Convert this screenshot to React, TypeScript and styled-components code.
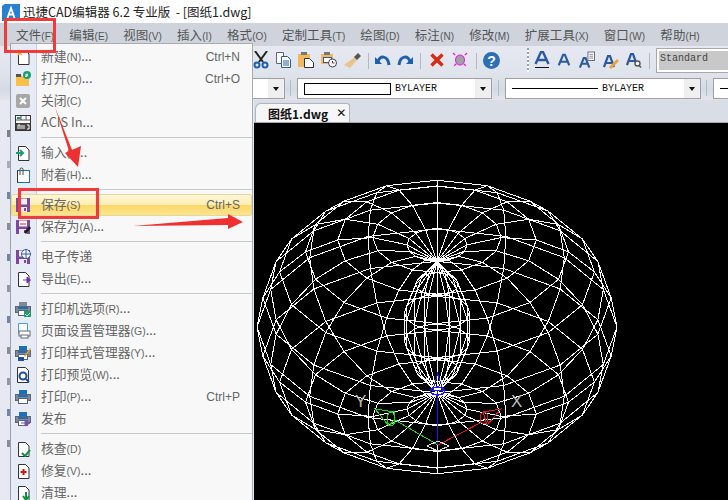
import React from "react";
import styled, { createGlobalStyle } from "styled-components";

const Global = createGlobalStyle`
  html, body { margin: 0; padding: 0; background: #fff; }
  body { font-family: "Noto Sans CJK SC", "Liberation Sans", sans-serif; }
`;
const Page = styled.div`
  position: relative; width: 728px; height: 500px; overflow: hidden;
  display: flex; flex-direction: column; background: #fff;
`;
const TitleBar = styled.div`
  height: 23px; display: flex; align-items: center; padding-left: 2px; gap: 3px;
  font-size: 12.5px; color: #222; white-space: pre; background: #fff;
`;
const MenuBar = styled.div`
  height: 23px; background: #ced3dc; display: flex; align-items: center; gap: 15px; padding: 0 0 1px 16px; box-sizing: border-box;
`;
const MenuLabel = styled.span`
  font-size: 12.5px; color: #555; white-space: nowrap; letter-spacing: .1px;
  small { font-size: 10px; font-family: "Liberation Sans", sans-serif; }
`;
const ToolRow = styled.div`
  height: 28px; background: linear-gradient(#e6e9f1, #dfe3ec); display: flex; align-items: center; padding-left: 253px; flex: none;
`;
const ComboRow = styled.div`
  height: 26px; background: linear-gradient(#dfe3ec, #d6dae4 60%, #e2e5ee); display: flex; align-items: flex-start; padding: 4px 0 0 253px; flex: none; box-sizing: border-box;
`;
const Tool = styled.span<{ $w: number; $ml?: number }>`
  width: ${p => p.$w}px; height: 18px; margin-left: ${p => p.$ml ?? 0}px; flex: none; display: flex; align-items: center; justify-content: center;
  svg { display: block; }
`;
const Sep = styled.i<{ $ml: number }>`
  width: 1px; height: 16px; background: #b4b8c1; margin: 2px 0 0 ${p => p.$ml}px; flex: none;
`;
const Grip = styled.i<{ $ml: number }>`
  width: 2px; height: 24px; margin-left: ${p => p.$ml}px; flex: none;
  background: repeating-linear-gradient(#9aa0aa 0 2px, #fff 2px 4px);
`;
const StyleBox = styled.div`
  margin-left: 6px; flex: 1; height: 19px; background: #fff; border: 1px solid #a8a8a8; border-right: none;
  padding: 2px 0 2px 2px; display: flex;
`;
const StyleValue = styled.div`
  flex: 1; background: #c8c8c8; color: #444; font: 10px/15px "Liberation Mono", monospace; padding-left: 1px;
`;
const Combo = styled.div<{ $w: number; $ml: number; $open?: boolean }>`
  width: ${p => p.$w}px; height: 19px; margin-left: ${p => p.$ml}px; flex: none; box-sizing: content-box;
  border: 1px solid #a0a0a0; background: #fff; display: flex; align-items: center; position: relative;
  border-right: ${p => (p.$open ? "none" : "1px solid #a0a0a0")};
  font: 10px "Liberation Mono", monospace; color: #111;
`;
const ComboFirst = styled(Combo)`
  border-left: none;
`;
const ComboArrow = styled.span`
  width: 16px; align-self: stretch; background: #efefef; display: flex; align-items: center; justify-content: center; margin-left: auto;
  &::after { content: ""; border: 3px solid transparent; border-top: 4px solid #111; border-bottom: none; }
`;
const Swatch = styled.span`
  width: 85px; height: 10px; border: 1px solid #000; margin: 0 4px 0 6px; flex: none;
`;
const LineSample = styled.span<{ $w: number }>`
  width: ${p => p.$w}px; height: 1px; background: #000; margin: 0 4px 0 6px; flex: none;
`;
const Workspace = styled.div`
  flex: 1; display: flex; min-height: 0;
`;
const Side = styled.div`
  width: 254px; flex: none; background: #e6e9f1; padding-top: 30px; display: flex; flex-direction: column; gap: 24px; align-items: flex-start;
`;
const SideDot = styled.i<{ $c: string }>`
  width: 3px; height: 7px; background: ${p => p.$c}; margin-left: 7px; flex: none; opacity: .7;
`;
const Main = styled.div`
  flex: 1; display: flex; flex-direction: column; min-width: 0;
`;
const TabStrip = styled.div`
  height: 23px; flex: none; background: #d9dde6; border-bottom: 1px solid #a8a8a8; display: flex; align-items: flex-end; padding-left: 1px; box-sizing: border-box;
`;
const Tab = styled.div`
  width: 95px; height: 19px; background: #f6f6f8; border: 1px solid #b0b4bc; border-bottom: none; border-radius: 6px 3px 0 0; box-sizing: border-box;
  font-size: 12px; font-weight: 700; color: #111; display: flex; align-items: center; padding-left: 12px; white-space: nowrap;
`;
const TabClose = styled.span`
  margin-left: 8px; font-size: 12px; font-family: "DejaVu Sans", sans-serif;
`;
const Canvas = styled.div`
  flex: 1; background: #000; min-height: 0; overflow: hidden;
  svg { display: block; }
`;
const Menu = styled.div`
  position: absolute; left: 10px; top: 43px; width: 243px; height: 457px; box-sizing: border-box; overflow: hidden;
  background: linear-gradient(90deg, #e7ebf5 0 25px, #c9cdd6 25px 26px, #f8f8f8 26px);
  border-left: 1px solid #9aa0ac; border-right: 1px solid #a8acb4; border-top: 1px solid #a8acb4; padding-top: 2px;
`;
const Row = styled.div<{ $active?: boolean }>`
  height: 22px; display: flex; align-items: center; padding-left: 4px; padding-right: 12px; box-sizing: border-box; position: relative;
  font-size: 12.8px; color: #666; white-space: nowrap;
  small { font-size: 10.5px; font-family: "Liberation Sans", sans-serif; }
  ${p => p.$active && `
    background: linear-gradient(#fdf6d8, #fdeeb4 48%, #fbd768 52%, #fce48f);
    border: 1px solid #e4d79c; border-radius: 2px;
    padding-left: 3px; padding-right: 11px;
  `}
`;
const RowLabel = styled.span`
  margin-bottom: 3px;
`;
const RowIcon = styled.span`
  width: 16px; height: 16px; flex: none; margin-right: 10px; svg { display: block; }
`;
const Shortcut = styled.span`
  margin-left: auto; font: 12px "Liberation Sans", sans-serif; color: #666;
`;
const Divider = styled.div`
  height: 8px; margin-left: 30px; margin-right: 0; position: relative;
  &::after { content: ""; position: absolute; left: 0; right: 0; top: 3px; height: 1px; background: #c9c9c9; }
`;
const Annotation = styled.svg`
  position: absolute; left: 0; top: 0; pointer-events: none;
`;

const S: React.FC<{ w?: number; h?: number; children: React.ReactNode }> = ({ w = 16, h = 16, children }) => (
  <svg width={w} height={h} viewBox={`0 0 ${w} ${h}`}>{children}</svg>
);

const Doc = ({ stroke = "#333" }: { stroke?: string }) => (
  <path d="M3.5 1.5h7l3.5 3.5v10.5H3.5z" fill="#fff" stroke={stroke} />
);
const Printer = ({ top = "#1f6fb8" }: { top?: string }) => (
  <>
    <rect x="4" y="1" width="8" height="5" fill={top} />
    <rect x="0.5" y="5.5" width="15" height="6" fill="#7f8a96" stroke="#5d6670" />
    <rect x="3.5" y="9.5" width="9" height="5" fill="#fff" stroke="#5d6670" />
    <rect x="3" y="6" width="10" height="2" fill="#1f6fb8" />
  </>
);
const Floppy = () => (
  <>
    <path d="M1 1h14v14H1z" fill="#7a4b9c" />
    <rect x="4" y="1.5" width="8" height="6" fill="#f3f1f6" />
    <rect x="4" y="10" width="8" height="5" fill="#e8e8ee" />
    <rect x="9" y="11" width="2" height="3" fill="#7a4b9c" />
  </>
);

const icons: Record<string, React.ReactNode> = {
  new: <S><Doc /><path d="M4 0l1 2.5L8 2 6 4l1.5 2.5L5 5.5 2.5 7 3 4 1 2.5 3.5 2z" fill="#f5a623" /></S>,
  open: <S><path d="M1 4h5l1 1h7v10H1z" fill="#f6c04a" /><path d="M1 3h5v3H1z" fill="#555" /><circle cx="12" cy="4" r="4" fill="#1aa06d" /><path d="M10 4h3M12 2.5v3h-2" stroke="#fff" fill="none" /></S>,
  close: <S><rect x="1" y="1" width="14" height="14" rx="2" fill="#a7a7a7" /><path d="M5 5l6 6M11 5l-6 6" stroke="#fff" strokeWidth="2" /></S>,
  acis: <S><rect x="0.5" y="0.5" width="15" height="15" fill="#fff" stroke="#333" /><path d="M1 5h14M6 1v4M11 1v4" stroke="#555" /><rect x="1" y="8" width="14" height="7" fill="#444" /><path d="M2 3h4" stroke="#1aa06d" strokeWidth="2" /><path d="M3 14v-4h2v4M7 14v-4M9 14v-4M12 14h2v-4h-2" stroke="#fff" fill="none" /></S>,
  input: <S><Doc /><path d="M1 8h6M5 5l3 3-3 3" stroke="#1aa06d" strokeWidth="2" fill="none" /></S>,
  attach: <S><rect x="2.5" y="3.5" width="12" height="12" fill="#fff" stroke="#1f6fb8" /><path d="M2.5 15.5v-12" stroke="#333" /><path d="M5 8V2.5a1.5 1.5 0 0 1 3 0V8" stroke="#444" fill="none" /></S>,
  save: <S><Floppy /></S>,
  saveas: <S><Floppy /><path d="M9 13l5-6 2 2-5 6z" fill="#222" /><path d="M5 5h6" stroke="#d33" /></S>,
  send: <S><Floppy /><circle cx="11" cy="5" r="4.5" fill="#fff" stroke="#2b5cab" /><path d="M6.5 5h9M11 .5v9" stroke="#2b5cab" /></S>,
  export: <S><Doc /><path d="M8 9h5M12 6l3.5 3-3.5 3z" fill="#7b2fa8" stroke="#7b2fa8" /></S>,
  plotter: <S><Printer top="#7f8a96" /><rect x="9" y="10" width="7" height="6" fill="#1aa06d" /><path d="M10 13l2 2 3-3" stroke="#fff" fill="none" /></S>,
  page: <S><path d="M3.5.5h9v10h-9z" fill="#fff" stroke="#4aa3d8" /><rect x="4" y="8" width="11" height="5" fill="#fff" stroke="#667" /><rect x="6" y="12" width="7" height="3" fill="#fff" stroke="#667" /></S>,
  pstyle: <S><Printer /><path d="M9 11l6-8 1 1-6 8z" fill="#e8a33a" /><path d="M3 12h6v4H3z" fill="#1f4f9c" /></S>,
  preview: <S><path d="M2.5.5h8l3 3v12h-11z" fill="#fff" stroke="#333" /><circle cx="8" cy="9" r="3.5" fill="none" stroke="#1f4f9c" strokeWidth="2" /><path d="M11 12l3 3" stroke="#1f4f9c" strokeWidth="2" /></S>,
  print: <S><Printer /></S>,
  publish: <S><Printer /><path d="M6 12h6M10 9l5 3-5 3z" fill="#7b4fb0" stroke="#7b4fb0" /></S>,
  audit: <S><Doc /><path d="M7 12l3 3 5-6" stroke="#0f8f3f" strokeWidth="2" fill="none" /></S>,
  repair: <S><Doc /><path d="M8.5 6v6M5.5 9h6" stroke="#e01010" strokeWidth="2" /></S>,
  purge: <S><Doc /><path d="M11 7v7M8 11l3 4 3-4" stroke="#0f8f3f" strokeWidth="2" fill="none" /></S>,
};

type Item = { k?: string; zh?: string; key?: string; tail?: string; sc?: string; active?: boolean; sep?: boolean };
const items: Item[] = [
  { k: "new", zh: "新建", key: "(N)", tail: "...", sc: "Ctrl+N" },
  { k: "open", zh: "打开", key: "(O)", tail: "...", sc: "Ctrl+O" },
  { k: "close", zh: "关闭", key: "(C)" },
  { k: "acis", zh: "ACIS In", tail: "..." },
  { sep: true },
  { k: "input", zh: "输入", key: "(I)", tail: "..." },
  { k: "attach", zh: "附着", key: "(H)", tail: "..." },
  { sep: true },
  { k: "save", zh: "保存", key: "(S)", sc: "Ctrl+S", active: true },
  { k: "saveas", zh: "保存为", key: "(A)", tail: "..." },
  { sep: true },
  { k: "send", zh: "电子传递" },
  { k: "export", zh: "导出", key: "(E)", tail: "..." },
  { sep: true },
  { k: "plotter", zh: "打印机选项", key: "(R)", tail: "..." },
  { k: "page", zh: "页面设置管理器", key: "(G)", tail: "..." },
  { k: "pstyle", zh: "打印样式管理器", key: "(Y)", tail: "..." },
  { k: "preview", zh: "打印预览", key: "(W)", tail: "..." },
  { k: "print", zh: "打印", key: "(P)", tail: "...", sc: "Ctrl+P" },
  { k: "publish", zh: "发布" },
  { sep: true },
  { k: "audit", zh: "核查", key: "(D)" },
  { k: "repair", zh: "修复", key: "(V)", tail: "..." },
  { k: "purge", zh: "清理", tail: "..." },
];
const menus: [string, string][] = [
  ["文件", "(F)"], ["编辑", "(E)"], ["视图", "(V)"], ["插入", "(I)"], ["格式", "(O)"], ["定制工具", "(T)"],
  ["绘图", "(D)"], ["标注", "(N)"], ["修改", "(M)"], ["扩展工具", "(X)"], ["窗口", "(W)"], ["帮助", "(H)"],
];

const BlueA = ({ under = false }: { under?: boolean }) => (
  <svg width="16" height="18" viewBox="0 0 16 18">
    <path d={under ? "M1.5 13L7 1h2l5.5 12M4 9h8" : "M2 15L7 3h2l5 12M4.5 11h7"} stroke="#2b5a9e" strokeWidth="2.4" fill="none" />
    {under && <path d="M1 16.5h14" stroke="#111" />}
  </svg>
);

/* Wire-frame: a spindle torus projected orthographically, the way the CAD view shows it. */
const CX = 437 - 254, CY = 327 - 123;
const R = 73, r = 107, TILT = (33 * Math.PI) / 180, NU = 16, NV = 19;
const pt = (u: number, v: number): string => {
  const rho = R + r * Math.cos(v);
  const h = r * Math.sin(v);
  const x = rho * Math.cos(u);
  const z = rho * Math.sin(u);
  return `${(CX + x).toFixed(1)},${(CY - (h * Math.cos(TILT) + z * Math.sin(TILT))).toFixed(1)}`;
};
const wires: string[] = [];
for (let i = 0; i < NU; i++) {
  const u = (i / NU) * Math.PI * 2;
  const a: string[] = [];
  for (let j = 0; j <= NV; j++) a.push(pt(u, (j / NV) * Math.PI * 2));
  wires.push(a.join(" "));
}
for (let j = 0; j < NV; j++) {
  const v = (j / NV) * Math.PI * 2;
  const a: string[] = [];
  for (let i = 0; i <= NU; i++) a.push(pt((i / NU) * Math.PI * 2, v));
  wires.push(a.join(" "));
}
const ox = -254, oy = -123;

const Wire = () => (
  <svg width="474" height="377" viewBox="0 0 474 377">
    <g fill="none" stroke="#fff" strokeWidth="1" strokeLinejoin="bevel" shapeRendering="crispEdges">
      {wires.map((d, i) => <polyline key={i} points={d} />)}
    </g>
    <g transform={`translate(${ox} ${oy})`} fill="none" shapeRendering="crispEdges">
      <text x="355" y="407" fill="#bbb" fontFamily="Liberation Sans, sans-serif" fontSize="17">Y</text>
      <text x="511" y="407" fill="#bbb" fontFamily="Liberation Sans, sans-serif" fontSize="17">X</text>
      <path d="M438 445L395 420M375 409L395 412 394 420 389 426z" stroke="#18d818" />
      <ellipse cx="391" cy="419" rx="4" ry="7" stroke="#18d818" />
      <path d="M438 445L482 422M501 409L483 412 487 425z" stroke="#e81818" />
      <ellipse cx="484" cy="418" rx="4" ry="6" stroke="#e81818" />
      <path d="M437.5 445V390M437.5 374L433 390h10z" stroke="#1a1aff" />
      <ellipse cx="437.5" cy="391" rx="7" ry="4" stroke="#1a1aff" strokeWidth="1.4" />
      <path d="M427 446l11-5 11 5-11 5z" stroke="#ddd" />
    </g>
  </svg>
);

export default function App() {
  return (
    <Page>
      <Global />
      <TitleBar>
        <svg width="18" height="18" viewBox="0 0 18 18">
          <rect x="0" y="1" width="18" height="17" fill="#2a7fd0" />
          <path d="M4 0L0 3V0zM8 1l3-1 3 1z" fill="#fff" />
          <path d="M5.5 15L9 5l3.5 10M7 11.5h4" stroke="#fff" strokeWidth="1.8" fill="none" />
        </svg>
        <span>迅捷CAD编辑器 6.2 专业版  - [图纸1.dwg]</span>
      </TitleBar>
      <MenuBar>
        {menus.map(([a, b]) => <MenuLabel key={a}>{a}<small>{b}</small></MenuLabel>)}
      </MenuBar>
      <ToolRow>
        <Tool $w={16}><svg width="16" height="18" viewBox="0 0 16 18"><path d="M2 0l8 11M14 0L6 11" stroke="#222" strokeWidth="2" /><circle cx="4" cy="14" r="2.5" fill="none" stroke="#1f5fb0" strokeWidth="2" /><circle cx="12" cy="14" r="2.5" fill="none" stroke="#1f5fb0" strokeWidth="2" /></svg></Tool>
        <Tool $w={16} $ml={6}><svg width="16" height="16" viewBox="0 0 16 16"><path d="M1.5.5h7v11h-7z" fill="#fff" stroke="#667" /><path d="M6.5 4.5h6l3 3v8h-9z" fill="#fff" stroke="#2b5a9e" /><path d="M8 9h6M8 11h6M8 13h6" stroke="#2b5a9e" /></svg></Tool>
        <Tool $w={16} $ml={7}><svg width="16" height="16" viewBox="0 0 16 16"><path d="M0 2h12v13H0z" fill="#f4b85c" /><rect x="3" y="0" width="6" height="3" fill="#777" /><path d="M6.5 6.5h5l4 4v5h-9z" fill="#fff" stroke="#333" /></svg></Tool>
        <Tool $w={17} $ml={7}><svg width="17" height="16" viewBox="0 0 17 16"><path d="M0 2h12v10H0z" fill="#f4b85c" /><rect x="3" y="0" width="6" height="3" fill="#777" /><rect x="2.5" y="5.5" width="8" height="5" fill="#fff" stroke="#2b5a9e" /><circle cx="11.5" cy="11" r="4" fill="#fff" stroke="#445" /><path d="M11.5 9v2h2" stroke="#445" fill="none" /></svg></Tool>
        <Tool $w={18} $ml={6}><svg width="18" height="16" viewBox="0 0 18 16"><path d="M11 5L0 13l6 3 7-8z" fill="#e8c48a" /><path d="M10 5l4-4 3 3-4 4z" fill="#555" /></svg></Tool>
        <Sep $ml={6} />
        <Tool $w={16} $ml={6}><svg width="16" height="14" viewBox="0 0 16 14"><path d="M3 9c1-7 10-7 11 3" fill="none" stroke="#1f5fb0" strokeWidth="3" /><path d="M0 4v7h7z" fill="#1f5fb0" /></svg></Tool>
        <Tool $w={16} $ml={6}><svg width="16" height="14" viewBox="0 0 16 14"><path d="M13 9C12 2 3 2 2 12" fill="none" stroke="#1f5fb0" strokeWidth="3" /><path d="M16 4v7H9z" fill="#1f5fb0" /></svg></Tool>
        <Sep $ml={7} />
        <Tool $w={14} $ml={9}><svg width="14" height="14" viewBox="0 0 14 14"><path d="M1.5 1.5l11 11M12.5 1.5l-11 11" stroke="#d92b12" strokeWidth="3.4" /></svg></Tool>
        <Tool $w={16} $ml={8}><svg width="16" height="16" viewBox="0 0 16 16"><path d="M1 1l14 14M15 1L1 15" stroke="#f010e0" strokeWidth="1.3" strokeDasharray="3 2" /><ellipse cx="8" cy="8" rx="4.5" ry="5" fill="#a0a0a8" stroke="#f010e0" /></svg></Tool>
        <Sep $ml={8} />
        <Tool $w={17} $ml={6}><svg width="17" height="17" viewBox="0 0 17 17"><circle cx="8.5" cy="8.5" r="8.5" fill="#2c6fb5" /><text x="8.5" y="13.5" textAnchor="middle" fontFamily="Liberation Sans, sans-serif" fontWeight="700" fontSize="14" fill="#fff">?</text></svg></Tool>
        <Grip $ml={27} />
        <Tool $w={16} $ml={5}><BlueA under /></Tool>
        <Tool $w={14} $ml={7}><BlueA /></Tool>
        <Tool $w={16} $ml={8}><svg width="17" height="18" viewBox="0 0 17 18"><path d="M1 17L5 7h2l4 10M3 13h6" stroke="#2b5a9e" strokeWidth="2.2" fill="none" /><rect x="9.5" y=".5" width="7" height="9" fill="#fff" stroke="#667" /><path d="M11 3h4M11 5h4M11 7h4" stroke="#889" /></svg></Tool>
        <Tool $w={16} $ml={8}><svg width="16" height="18" viewBox="0 0 16 18"><path d="M1 16L5 5h2l4 11M3 12h6" stroke="#2b5a9e" strokeWidth="2.2" fill="none" /><path d="M6 16l8-8 2 2-8 8z" fill="#e8a33a" /></svg></Tool>
        <Tool $w={16} $ml={7}><svg width="16" height="18" viewBox="0 0 16 18"><path d="M1 14L5 3h2l4 11M3 10h6" stroke="#2b5a9e" strokeWidth="2.2" fill="none" /><circle cx="11.5" cy="12.5" r="2.5" fill="#fff" stroke="#555" strokeWidth="1.4" /><path d="M13 14.5l2 2" stroke="#555" strokeWidth="1.6" /></svg></Tool>
        <Sep $ml={7} />
        <StyleBox><StyleValue>Standard</StyleValue></StyleBox>
      </ToolRow>
      <ComboRow>
        <ComboFirst $w={31} $ml={0}><ComboArrow /></ComboFirst>
        <Sep $ml={5} />
        <Combo $w={193} $ml={6}><Swatch />BYLAYER<ComboArrow /></Combo>
        <Sep $ml={6} />
        <Combo $w={194} $ml={6}><LineSample $w={86} />BYLAYER<ComboArrow /></Combo>
        <Sep $ml={5} />
        <Combo $w={40} $ml={6} $open><LineSample $w={40} /></Combo>
      </ComboRow>
      <Workspace>
        <Side>
          {["#4a5668", "#8a93a4", "#3f5a8a", "#5c6675", "#3f5a8a", "#6b7484", "#3f5a8a", "#5c6675", "#6b7484", "#3f5a8a", "#5c6675"].map((c, i) => <SideDot key={i} $c={c} />)}
        </Side>
        <Main>
          <TabStrip>
            <Tab>图纸1.dwg<TabClose>✕</TabClose></Tab>
          </TabStrip>
          <Canvas><Wire /></Canvas>
        </Main>
      </Workspace>
      <Menu>
        {items.map((it, i) =>
          it.sep ? <Divider key={i} /> : (
            <Row key={i} $active={it.active}>
              <RowIcon>{icons[it.k!]}</RowIcon>
              <RowLabel>{it.zh}{it.key && <small>{it.key}</small>}{it.tail}</RowLabel>
              {it.sc && <Shortcut>{it.sc}</Shortcut>}
            </Row>
          )
        )}
      </Menu>
      <Annotation width="728" height="500" viewBox="0 0 728 500">
        <g fill="none" stroke="#f23a3a" strokeWidth="3">
          <rect x="5.5" y="19.5" width="49" height="32" />
          <rect x="19.5" y="189.5" width="78" height="28" />
        </g>
        <g fill="#f03030">
          <path d="M55 107L72 150 81 146 78 167 65 153 69 151z" />
          <path d="M133 226L228 218V214L243 222 228 229V225z" />
        </g>
      </Annotation>
    </Page>
  );
}
